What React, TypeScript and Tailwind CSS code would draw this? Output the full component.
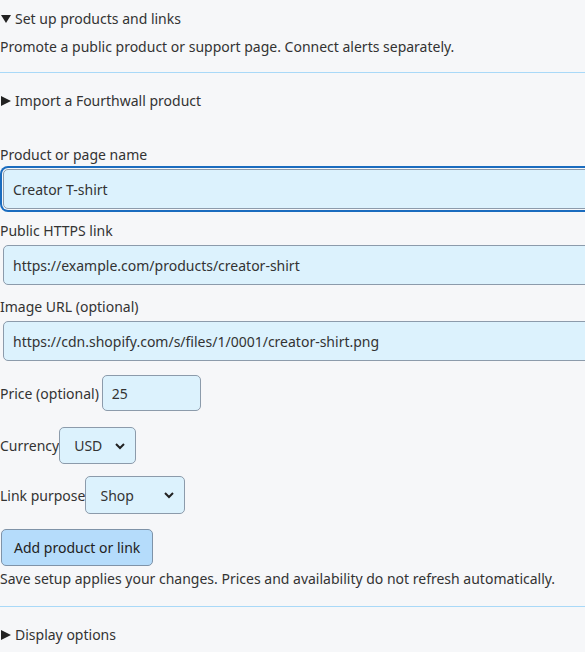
import { useState } from "react";

function Chevron() {
  return (
    <svg
      viewBox="0 0 12 12"
      className="pointer-events-none absolute right-[10px] top-1/2 h-[12px] w-[12px] -translate-y-1/2"
      aria-hidden="true"
    >
      <path d="M2 4 L6 8 L10 4" fill="none" stroke="#222" strokeWidth="2" />
    </svg>
  );
}

function Caret({ open }: { open?: boolean }) {
  return (
    <svg viewBox="0 0 10 10" className="ml-[1px] mr-[4px] h-[10px] w-[10px]" aria-hidden="true">
      {open ? (
        <path d="M0 1 L10 1 L5 9 Z" fill="#222" />
      ) : (
        <path d="M0 0 L10 5 L0 10 Z" fill="#222" />
      )}
    </svg>
  );
}

function Field({
  label,
  value,
  focused,
}: {
  label: string;
  value: string;
  focused?: boolean;
}) {
  return (
    <div className="mb-[11px]">
      <label className="block leading-[22px]">{label}</label>
      <input
        defaultValue={value}
        className={`mt-[3px] ml-[3px] block h-[40px] w-[600px] rounded-[5px] border border-[#8c9bab] bg-[#dcf2fd] px-[9px] text-[#333] outline-none ${
          focused ? "shadow-[0_0_0_1px_#f6f7f9,0_0_0_3px_#1a6cbf]" : ""
        }`}
      />
    </div>
  );
}

export default function App() {
  const [currency, setCurrency] = useState("USD");
  const [purpose, setPurpose] = useState("Shop");

  return (
    <div className="min-h-[652px] w-[585px] overflow-hidden bg-[#f6f7f9] font-['Noto_Sans',sans-serif] text-[14px] text-[#333]">
      {/* Setup section */}
      <div className="pt-[8px]">
        <div className="flex items-center leading-[22px]">
          <Caret open />
          <span>Set up products and links</span>
        </div>
        <p className="mt-[6px] leading-[22px]">
          Promote a public product or support page. Connect alerts separately.
        </p>
        <div className="mt-[14px] h-px bg-[#a9d9f8]" />
        <div className="mt-[17px] flex items-center leading-[22px]">
          <Caret />
          <span>Import a Fourthwall product</span>
        </div>
      </div>

      {/* Product form */}
      <div className="mt-[32px]">
        <Field label="Product or page name" value="Creator T-shirt" focused />
        <Field label="Public HTTPS link" value="https://example.com/products/creator-shirt" />
        <Field
          label="Image URL (optional)"
          value="https://cdn.shopify.com/s/files/1/0001/creator-shirt.png"
        />

        <div className="mt-[14px] flex items-center">
          <label>Price (optional)</label>
          <input
            defaultValue="25"
            className="ml-[3px] h-[36px] w-[99px] rounded-[5px] border border-[#8c9bab] bg-[#dcf2fd] px-[9px] text-[#333] outline-none"
          />
        </div>

        <div className="mt-[16px] flex items-center">
          <label>Currency</label>
          <div className="relative">
            <select
              value={currency}
              onChange={(e) => setCurrency(e.target.value)}
              className="block h-[37px] w-[77px] appearance-none rounded-[5px] border border-[#8c9bab] bg-[#dcf2fd] pl-[14px] text-[#333] outline-none"
            >
              <option>USD</option>
              <option>EUR</option>
              <option>GBP</option>
            </select>
            <Chevron />
          </div>
        </div>

        <div className="mt-[12px] flex items-center">
          <label>Link purpose</label>
          <div className="relative">
            <select
              value={purpose}
              onChange={(e) => setPurpose(e.target.value)}
              className="block h-[38px] w-[100px] appearance-none rounded-[5px] border border-[#8c9bab] bg-[#dcf2fd] pl-[14px] text-[#333] outline-none"
            >
              <option>Shop</option>
              <option>Support</option>
            </select>
            <Chevron />
          </div>
        </div>

        <button className="mt-[15px] ml-[1px] h-[37px] rounded-[5px] border border-[#7f93a8] bg-[#b5dcfb] px-[12px] text-[#222]">
          Add product or link
        </button>
        <p className="mt-[2px] leading-[22px]">
          Save setup applies your changes. Prices and availability do not refresh automatically.
        </p>
      </div>

      <div className="mt-[16px] h-px bg-[#a9d9f8]" />
      <div className="mt-[17px] flex items-center leading-[22px]">
        <Caret />
        <span>Display options</span>
      </div>
    </div>
  );
}
